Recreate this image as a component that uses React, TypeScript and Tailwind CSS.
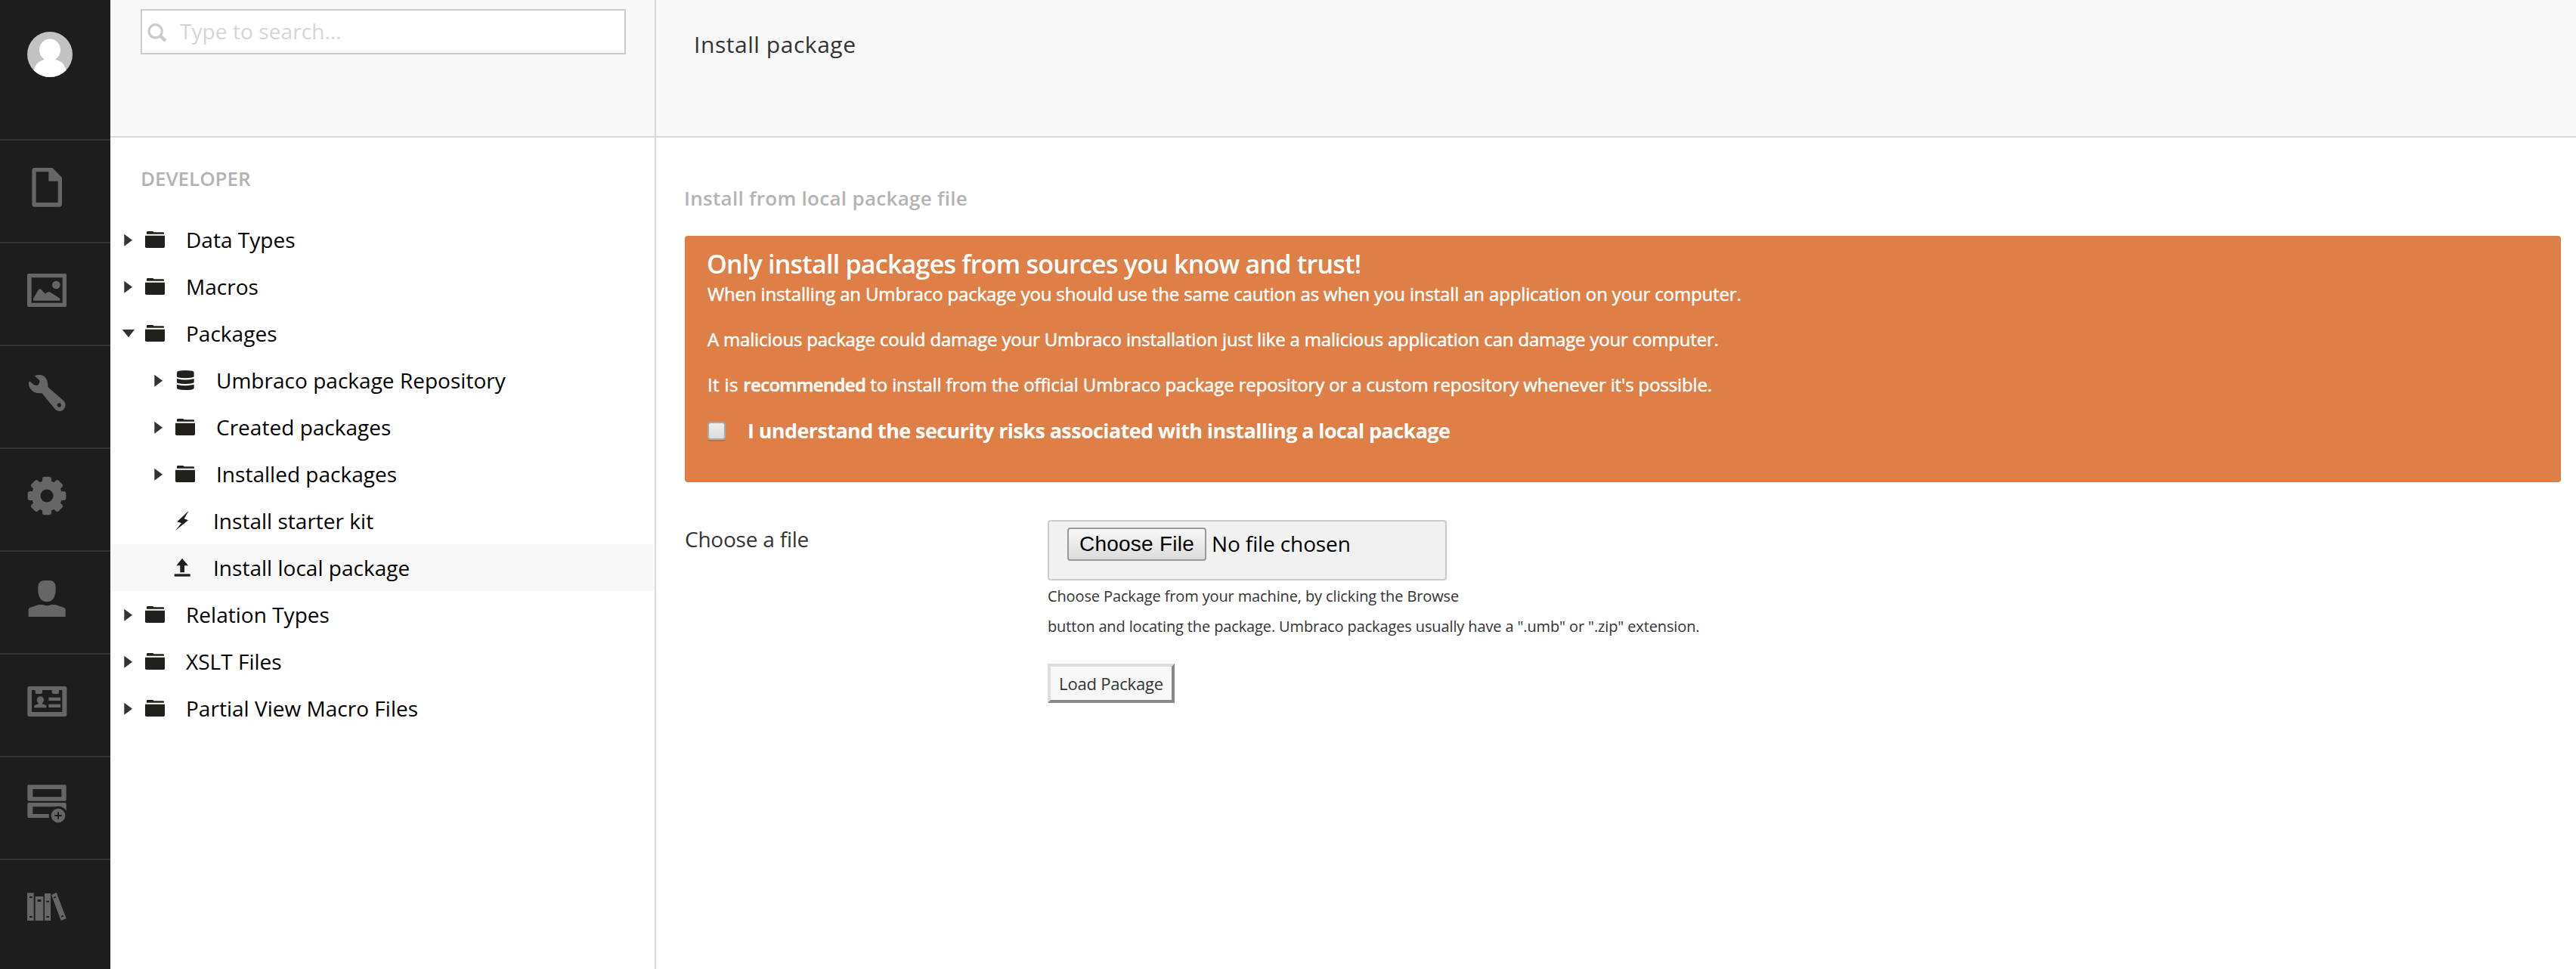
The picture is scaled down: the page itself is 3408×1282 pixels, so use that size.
import type { ReactNode } from "react";

type IconKind = "folder" | "database" | "bolt" | "upload";

type TreeNode = {
  label: string;
  icon: IconKind;
  level: 1 | 2;
  state: "closed" | "open" | "leaf";
  active?: boolean;
};

const tree: TreeNode[] = [
  { label: "Data Types", icon: "folder", level: 1, state: "closed" },
  { label: "Macros", icon: "folder", level: 1, state: "closed" },
  { label: "Packages", icon: "folder", level: 1, state: "open" },
  { label: "Umbraco package Repository", icon: "database", level: 2, state: "closed" },
  { label: "Created packages", icon: "folder", level: 2, state: "closed" },
  { label: "Installed packages", icon: "folder", level: 2, state: "closed" },
  { label: "Install starter kit", icon: "bolt", level: 2, state: "leaf" },
  { label: "Install local package", icon: "upload", level: 2, state: "leaf", active: true },
  { label: "Relation Types", icon: "folder", level: 1, state: "closed" },
  { label: "XSLT Files", icon: "folder", level: 1, state: "closed" },
  { label: "Partial View Macro Files", icon: "folder", level: 1, state: "closed" },
];

const treeIcons: Record<IconKind, ReactNode> = {
  folder: (
    <>
      <path d="M6 71V64q0-4 4-4h20q3 0 4 4h38q3 0 3 3v4z" />
      <path d="M0 77h78v44q0 5-5 5H5q-5 0-5-5z" />
    </>
  ),
  database: (
    <>
      <path d="M6 62q0-8 34-8t34 8v16q0 6-34 7-34-1-34-7z" />
      <path d="M6 87q34 9 68 0v14q0 6-34 7-34-1-34-7z" />
      <path d="M6 110q34 9 68 0v14q0 8-34 8t-34-8z" />
    </>
  ),
  bolt: <path d="M53 53L7 97l17 5L0 132l51-41-16-6z" />,
  upload: (
    <>
      <path d="M27 56L4 85h15v27h17V85h15z" />
      <path d="M-4 118h63v10H-4z" />
    </>
  ),
};

const sectionIcons: { name: string; viewBox: string; art: ReactNode }[] = [
  {
    name: "Content",
    viewBox: "0 558 438 402",
    art: (
      <path
        fillRule="evenodd"
        d="M138 666H208L246 705V810q0 11-11 11H138q-11 0-11-11V677q0-11 11-11zM143 682V804H230V719H193V682z"
      />
    ),
  },
  {
    name: "Media",
    viewBox: "0 966 438 402",
    art: (
      <>
        <path fillRule="evenodd" d="M113 1086H259q5 0 5 5V1213q0 5-5 5H113q-5 0-5-5V1091q0-5 5-5zM125 1102V1202H248V1102z" />
        <circle cx="223" cy="1131" r="16" />
        <path d="M132 1193v-8l20-34q5-7 11-2l17 17q10-10 20-6l38 24v9z" />
      </>
    ),
  },
  {
    name: "Settings",
    viewBox: "0 54 438 402",
    art: (
      <path
        fillRule="evenodd"
        d="M137 172Q146 167 160 168Q178 170 186 188Q191 202 190 216L252 270Q262 281 259 293Q254 310 238 312Q228 312 220 306L166 240Q150 242 135 236Q114 222 114 204Q114 197 117 193L136 208Q146 213 152 207Q158 200 157 190zM235 280a8 8 0 1 0 .1 0z"
      />
    ),
  },
  {
    name: "Developer",
    viewBox: "0 462 438 402",
    art: (
      <>
        <circle cx="186" cy="648" r="43" fill="none" stroke="currentColor" strokeWidth="35" />
        {[0, 45, 90, 135, 180, 225, 270, 315].map((angle) => (
          <rect key={angle} x="168" y="572" width="36" height="30" rx="9" transform={`rotate(${angle} 186 648)`} />
        ))}
      </>
    ),
  },
  {
    name: "Users",
    viewBox: "0 870 438 402",
    art: (
      <>
        <path d="M172 984h29q20 4 20 26v16q-4 42-35 43-31-1-35-43v-16q0-22 21-26z" />
        <path d="M113 1128V1100q0-7 7-9L154 1080h16q16 8 32 0h18l33 11q7 2 7 9v28z" />
      </>
    ),
  },
  {
    name: "Members",
    viewBox: "0 78 438 402",
    art: (
      <>
        <path fillRule="evenodd" d="M116 204H258q7 0 7 7V317q0 7-7 7H116q-7 0-7-7V211q0-7 7-7zM126 219V306H247V219z" />
        <path d="M140 216h28v13q0 5-5 5h-18q-5 0-5-5zM206 216h28v13q0 5-5 5h-18q-5 0-5-5z" />
        <circle cx="160" cy="258" r="14" />
        <path d="M152 265h16v9l16 6v9h-48v-9l16-6z" />
        <path d="M193 248h47v13h-47zM193 275h47v13h-47z" />
      </>
    ),
  },
  {
    name: "Forms",
    viewBox: "0 486 438 402",
    art: (
      <>
        <path fillRule="evenodd" d="M114 595H258q5 0 5 5V653q0 6-5 6H114q-5 0-5-6V600q0-5 5-5zM130 612V643H244V612z" />
        <path fillRule="evenodd" d="M114 666H258q5 0 5 5V721q0 5-5 5H114q-5 0-5-5V671q0-5 5-5zM130 682V711H244V682z" />
        <circle cx="231" cy="717" r="37" fill="#1d1d1d" />
        <circle cx="231" cy="717" r="28" />
        <path d="M231 703v28M217 717h28" stroke="#1d1d1d" strokeWidth="6" />
      </>
    ),
  },
  {
    name: "Library",
    viewBox: "0 894 438 402",
    art: (
      <>
        <path d="M108 1024h26v110h-26zM140 1038h32v96h-32zM177 1026h24v108h-24zM204 1032l20-10 39 104-21 8z" />
        <path
          fill="#1d1d1d"
          d="M117 1038h11v6h-11zM117 1116h11v6h-11zM149 1050h14v9h-14zM184 1055h11v6h-11zM184 1116h11v6h-11zM212 1041l9-4 2 5-9 4zM242 1116l9-4 2 5-9 4z"
        />
      </>
    ),
  },
];

function Rail() {
  return (
    <nav className="flex w-[146px] shrink-0 flex-col bg-[#1d1d1d] text-[#666]">
      <div className="h-[184px] pl-9 pt-[42px]">
        <svg className="block size-[60px] rounded-full bg-[#c2c2c2]" viewBox="0 0 60 60" fill="#fff">
          <ellipse cx="30" cy="24" rx="14" ry="14.5" />
          <path d="M22 33h16v4q12 3 14 17v6H8v-6q2-14 14-17z" />
        </svg>
      </div>
      {sectionIcons.map((s) => (
        <a key={s.name} aria-label={s.name} className="block h-[136px] border-t-2 border-[#343434]">
          <svg className="block h-[134px] w-[146px]" viewBox={s.viewBox} fill="currentColor">
            {s.art}
          </svg>
        </a>
      ))}
    </nav>
  );
}

function TreeRow({ node }: { node: TreeNode }) {
  return (
    <li className={`flex h-[62px] items-start ${node.level === 2 ? "pl-10" : ""} ${node.active ? "bg-[#f8f8f8]" : ""}`}>
      <svg className="h-[62px] w-[46px] shrink-0" viewBox="0 0 138 186" fill="#333">
        {node.state === "closed" && <path d="M55 71v48l32-24z" />}
        {node.state === "open" && <path d="M47 78h49l-24 31z" />}
      </svg>
      <svg
        className={`h-[62px] shrink-0 overflow-visible ${node.state === "leaf" ? "w-[50px]" : "w-[54px]"}`}
        viewBox={node.state === "leaf" ? "0 0 150 186" : "0 0 162 186"}
        fill="#21201c"
      >
        {treeIcons[node.icon]}
      </svg>
      <span className="text-[28px] leading-[62px] tracking-[0.02px] text-black">{node.label}</span>
    </li>
  );
}

function Navigation() {
  return (
    <aside className="flex w-[722px] shrink-0 flex-col border-r-2 border-[#d9d9d9]">
      <div className="h-[182px] border-b-2 border-[#d9d9d9] bg-[#f8f8f8] pl-10 pt-3">
        <div className="flex h-[60px] w-[642px] items-start border-2 border-[#ccc] bg-white">
          <svg className="h-[56px] w-[50px] shrink-0" viewBox="564 42 150 168" fill="none" stroke="#ccc">
            <circle cx="617" cy="124" r="26" strokeWidth="10" />
            <path d="M637 143l20 19" strokeWidth="14" />
          </svg>
          <span className="text-[28px] leading-[54px] tracking-[0.08px] text-[#d5d5d5]">Type to search...</span>
        </div>
      </div>
      <h5 className="mt-[35px] pl-10 text-[26px] font-semibold leading-[38px] tracking-[-0.05px] text-[#b3b3b3]">DEVELOPER</h5>
      <ul className="mt-[31px]">
        {tree.map((node) => (
          <TreeRow key={node.label} node={node} />
        ))}
      </ul>
    </aside>
  );
}

function Warning() {
  return (
    <section className="h-[326px] rounded bg-[#dd7f47] pl-[30px] pt-[17px] text-white">
      <h4 className="-ml-px text-[34px] font-semibold leading-10 tracking-[-0.77px]">
        Only install packages from sources you know and trust!
      </h4>
      <div className="flex flex-col gap-5 text-[24px] leading-10 [-webkit-text-stroke:0.5px_white]">
        <p className="tracking-[-0.15px]">
          When installing an Umbraco package you should use the same caution as when you install an application on your
          computer.
        </p>
        <p className="tracking-[-0.188px]">
          A malicious package could damage your Umbraco installation just like a malicious application can damage your
          computer.
        </p>
        <p className="tracking-[-0.129px]">
          <span className="tracking-[0.35px]">It is </span>
          <strong className="font-semibold tracking-[-0.68px]">recommended</strong> to install from the official Umbraco
          package repository or a custom repository whenever it's possible.
        </p>
      </div>
      <label className="mt-5 flex items-start gap-[29px]">
        <span className="mt-[9px] block size-6 rounded-sm border-2 border-[#aaa] bg-linear-to-b from-[#eee] to-[#dcdcdc] shadow-[0_2px_1px_rgba(0,0,0,0.12)]" />
        <span className="text-[27px] font-bold leading-[41px] tracking-[-0.61px]">
          I understand the security risks associated with installing a local package
        </span>
      </label>
    </section>
  );
}

function FileForm() {
  return (
    <div className="mt-[50px] flex items-start text-[#333]">
      <div className="w-[480px] shrink-0 pt-[5px] text-[28px] leading-10 tracking-[-0.22px]">Choose a file</div>
      <div>
        <div className="flex h-20 w-[528px] items-start gap-[7px] rounded border-2 border-[#ccc] bg-[#f1f1f1] pl-6 pt-2">
          <button className="h-11 w-[184px] rounded-sm border-2 border-[#999] bg-linear-to-b from-[#f8f8f8] to-[#dcdcdc] font-['Liberation_Sans',sans-serif] text-[28px] leading-10 tracking-[0.25px] text-black">
            Choose File
          </button>
          <span className="mt-px text-[28px] leading-10 tracking-[-0.12px] text-black">No file chosen</span>
        </div>
        <p className="pt-px text-[20px] leading-10 tracking-[-0.125px]">
          Choose Package from your machine, by clicking the Browse
          <br />
          button and locating the package. Umbraco packages usually have a ".umb" or ".zip" extension.
        </p>
        <button className="mt-[29px] h-[52px] w-[168px] border-4 border-b-[#888] border-l-[#ddd] border-r-[#888] border-t-[#ddd] bg-[#f8f8f8] text-[22px] leading-[42px] tracking-[-0.2px]">
          Load Package
        </button>
      </div>
    </div>
  );
}

export default function App() {
  return (
    <div className="flex h-[1282px] w-[3408px] overflow-hidden whitespace-nowrap bg-white font-['Open_Sans',sans-serif]">
      <Rail />
      <Navigation />
      <main className="flex grow flex-col">
        <header className="h-[182px] border-b-2 border-[#d9d9d9] bg-[#f8f8f8] pl-[50px] pt-[39px]">
          <h1 className="text-[30px] leading-10 tracking-[0.55px] text-[#333]">Install package</h1>
        </header>
        <div className="pl-[38px] pr-5 pt-[60px]">
          <h2 className="-ml-px mb-[30px] text-[26px] font-semibold leading-10 tracking-[0.29px] text-[#b3b3b3]">
            Install from local package file
          </h2>
          <Warning />
          <FileForm />
        </div>
      </main>
    </div>
  );
}
